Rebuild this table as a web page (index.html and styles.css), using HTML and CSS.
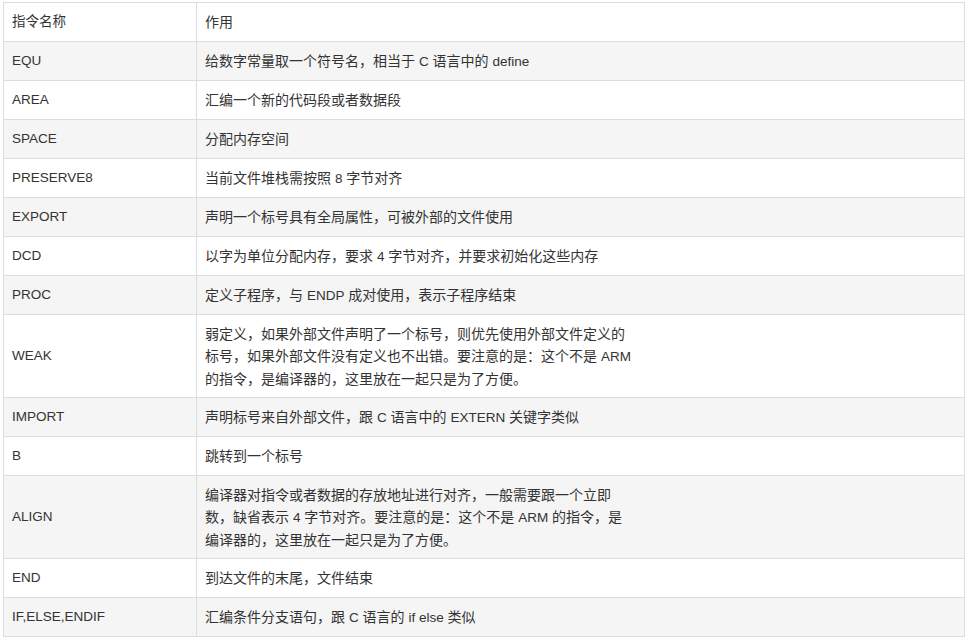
FILE: index.html
```html
<!DOCTYPE html>
<html lang="zh">
<head>
<meta charset="utf-8">
<link rel="stylesheet" href="styles.css">
</head>
<body>
<table class="cmd-table">
  <colgroup><col class="c1"><col class="c2"></colgroup>
  <tr><td class="name">指令名称</td><td>作用</td></tr>
  <tr><td class="name">EQU</td><td>给数字常量取一个符号名，相当于 <span class="en">C</span> 语言中的 <span class="en">define</span></td></tr>
  <tr><td class="name">AREA</td><td>汇编一个新的代码段或者数据段</td></tr>
  <tr><td class="name">SPACE</td><td>分配内存空间</td></tr>
  <tr><td class="name">PRESERVE8</td><td>当前文件堆栈需按照 <span class="en">8</span> 字节对齐</td></tr>
  <tr><td class="name">EXPORT</td><td>声明一个标号具有全局属性，可被外部的文件使用</td></tr>
  <tr><td class="name">DCD</td><td>以字为单位分配内存，要求 <span class="en">4</span> 字节对齐，并要求初始化这些内存</td></tr>
  <tr><td class="name">PROC</td><td>定义子程序，与 <span class="en">ENDP</span> 成对使用，表示子程序结束</td></tr>
  <tr class="tall"><td class="name">WEAK</td><td>弱定义，如果外部文件声明了一个标号，则优先使用外部文件定义的<br>标号，如果外部文件没有定义也不出错。要注意的是：这个不是 <span class="en">ARM</span><br>的指令，是编译器的，这里放在一起只是为了方便。</td></tr>
  <tr><td class="name">IMPORT</td><td>声明标号来自外部文件，跟 <span class="en">C</span> 语言中的 <span class="en">EXTERN</span> 关键字类似</td></tr>
  <tr><td class="name">B</td><td>跳转到一个标号</td></tr>
  <tr class="tall"><td class="name">ALIGN</td><td>编译器对指令或者数据的存放地址进行对齐，一般需要跟一个立即<br>数，缺省表示 <span class="en">4</span> 字节对齐。要注意的是：这个不是 <span class="en">ARM</span> 的指令，是<br>编译器的，这里放在一起只是为了方便。</td></tr>
  <tr><td class="name">END</td><td>到达文件的末尾，文件结束</td></tr>
  <tr><td class="name">IF,ELSE,ENDIF</td><td>汇编条件分支语句，跟 <span class="en">C</span> 语言的 <span class="en">if else</span> 类似</td></tr>
</table>
</body>
</html>
```
FILE: styles.css
```css
html, body {
  margin: 0;
  padding: 0;
  background: #fff;
}
body {
  padding: 2px 0 0 3px;
  font-family: "Liberation Sans", "Noto Sans CJK SC", sans-serif;
  font-size: 14px;
  color: #333;
}
.cmd-table {
  border-collapse: collapse;
  width: 962px;
  table-layout: fixed;
}
.c1 { width: 193px; }
.cmd-table tr {
  height: 39px;
}
.cmd-table tr.tall {
  height: 83px;
}
.cmd-table td {
  border: 1px solid #ddd;
  padding: 0 8px;
  line-height: 22px;
  vertical-align: middle;
  text-align: left;
  white-space: nowrap;
}
.cmd-table td.name,
.cmd-table .en {
  font-size: 13.5px;
}
.cmd-table tr:nth-child(even) td {
  background: #f5f5f5;
}
```
